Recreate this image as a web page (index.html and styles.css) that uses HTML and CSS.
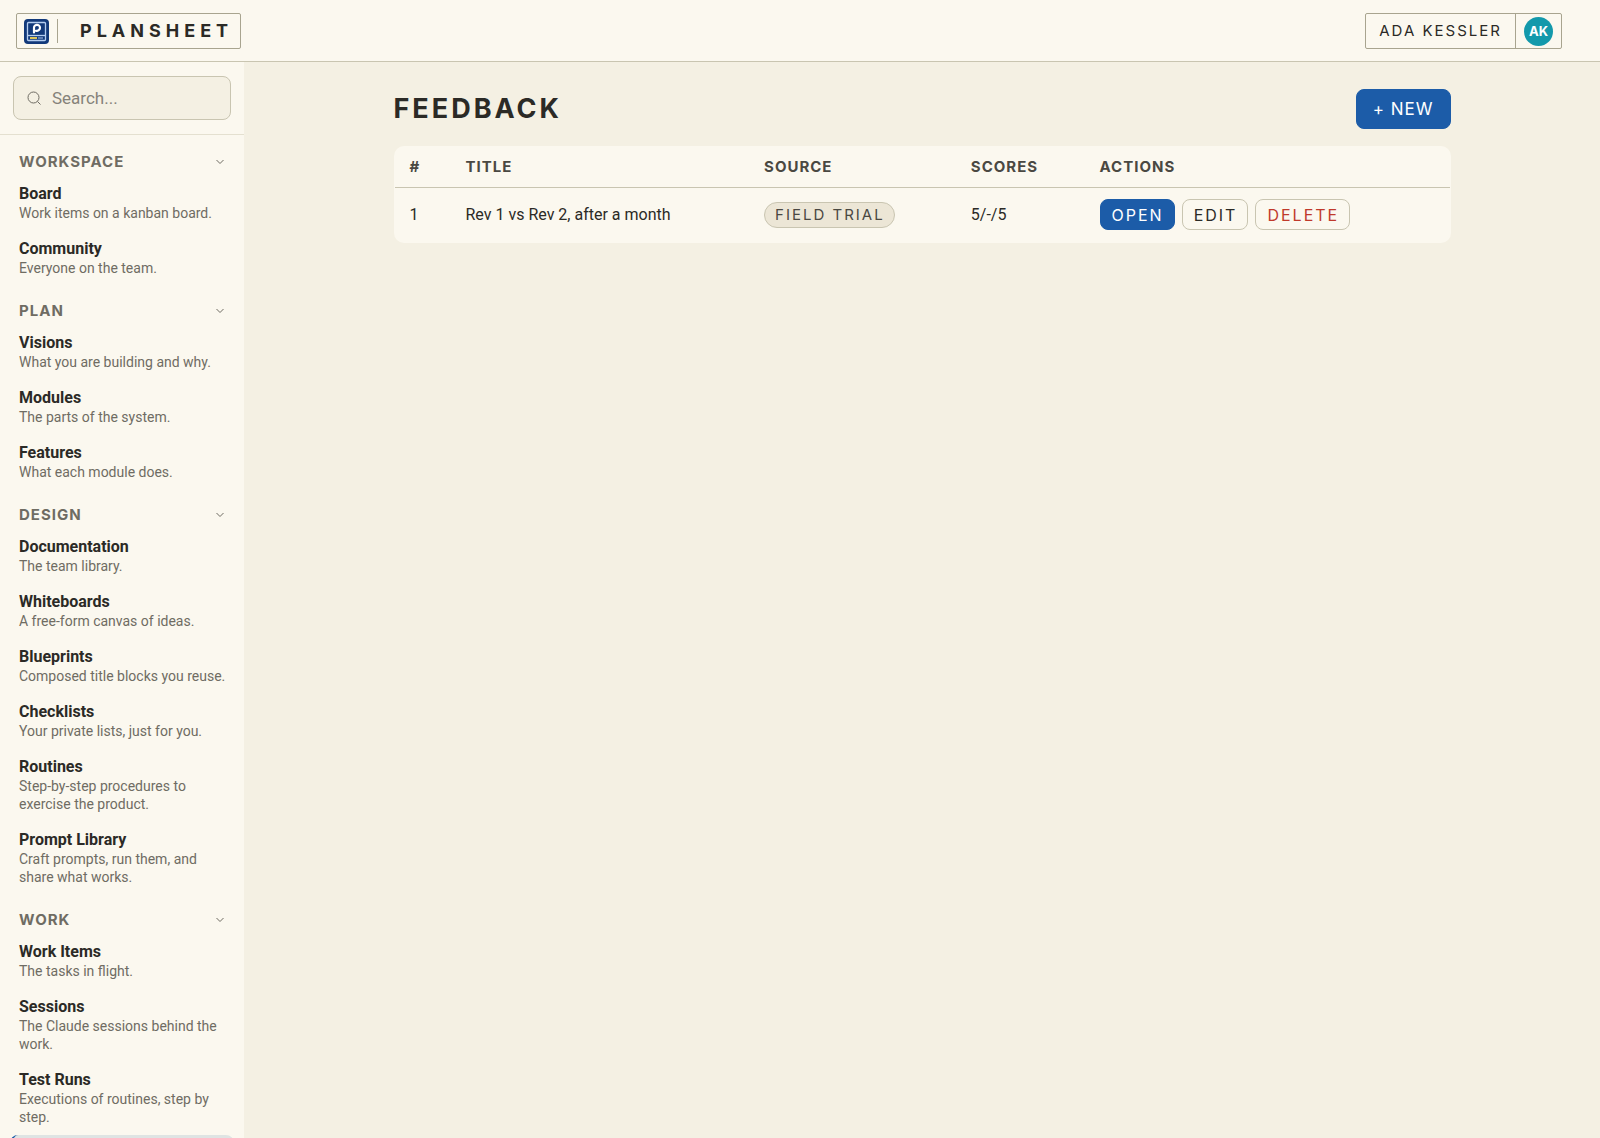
FILE: index.html
```html
<!DOCTYPE html>
<html lang="en">
<head>
<meta charset="utf-8">
<meta name="viewport" content="width=device-width, initial-scale=1">
<title>Feedback · Plansheet</title>
<link rel="stylesheet" href="styles.css">
</head>
<body>
<header class="topbar">
  <a class="brand" href="#">
    <svg class="brand-mark" viewBox="0 0 25 25" aria-hidden="true">
      <rect width="25" height="25" rx="4" fill="#12397a"/>
      <rect x="3.500" y="3.500" width="18" height="18" rx="1" fill="none" stroke="#b4cdf0" stroke-width="1.300"/>
      <path d="M3.500 16.500h18" stroke="#b4cdf0" stroke-width="1.300"/>
      <path d="M10 13.500V9.200a3 3 0 1 1 3 2.600h-1" fill="none" stroke="#fff" stroke-width="2.200" stroke-linecap="round" stroke-linejoin="round"/>
      <rect x="6" y="18" width="7" height="2" fill="#dcc458"/>
      <rect x="14" y="18" width="5" height="2" fill="#5f7fb4"/>
    </svg>
    <span class="brand-name">PLANSHEET</span>
  </a>
  <button class="user" type="button">
    <span class="user-name">ADA KESSLER</span>
    <span class="user-cell"><span class="avatar">AK</span></span>
  </button>
</header>
<div class="shell">
  <aside class="sidebar">
    <form class="search" role="search">
      <label class="search-box">
        <svg class="search-icon" viewBox="0 0 16 16" aria-hidden="true"><circle cx="7.500" cy="7.500" r="5.500"/><path d="M11.500 11.500l3 3"/></svg>
        <input class="search-input" type="search" placeholder="Search..." aria-label="Search">
      </label>
    </form>
    <nav class="nav">
      <button class="group" type="button">WORKSPACE<svg class="chevron" viewBox="0 0 10 6" aria-hidden="true"><path d="M1.500 1l3.500 3.500 3.500-3.500"/></svg></button>
      <a class="item" href="#"><span class="item-title">Board</span><span class="item-note">Work items on a kanban board.</span></a>
      <a class="item" href="#"><span class="item-title">Community</span><span class="item-note">Everyone on the team.</span></a>
      <button class="group" type="button">PLAN<svg class="chevron" viewBox="0 0 10 6" aria-hidden="true"><path d="M1.500 1l3.500 3.500 3.500-3.500"/></svg></button>
      <a class="item" href="#"><span class="item-title">Visions</span><span class="item-note">What you are building and why.</span></a>
      <a class="item" href="#"><span class="item-title">Modules</span><span class="item-note">The parts of the system.</span></a>
      <a class="item" href="#"><span class="item-title">Features</span><span class="item-note">What each module does.</span></a>
      <button class="group" type="button">DESIGN<svg class="chevron" viewBox="0 0 10 6" aria-hidden="true"><path d="M1.500 1l3.500 3.500 3.500-3.500"/></svg></button>
      <a class="item" href="#"><span class="item-title">Documentation</span><span class="item-note">The team library.</span></a>
      <a class="item" href="#"><span class="item-title">Whiteboards</span><span class="item-note">A free-form canvas of ideas.</span></a>
      <a class="item" href="#"><span class="item-title">Blueprints</span><span class="item-note">Composed title blocks you reuse.</span></a>
      <a class="item" href="#"><span class="item-title">Checklists</span><span class="item-note">Your private lists, just for you.</span></a>
      <a class="item" href="#"><span class="item-title">Routines</span><span class="item-note">Step-by-step procedures to exercise the product.</span></a>
      <a class="item" href="#"><span class="item-title">Prompt Library</span><span class="item-note">Craft prompts, run them, and share what works.</span></a>
      <button class="group" type="button">WORK<svg class="chevron" viewBox="0 0 10 6" aria-hidden="true"><path d="M1.500 1l3.500 3.500 3.500-3.500"/></svg></button>
      <a class="item" href="#"><span class="item-title">Work Items</span><span class="item-note">The tasks in flight.</span></a>
      <a class="item" href="#"><span class="item-title">Sessions</span><span class="item-note">The Claude sessions behind the work.</span></a>
      <a class="item" href="#"><span class="item-title">Test Runs</span><span class="item-note">Executions of routines, step by step.</span></a>
      <a class="item item-active" href="#" aria-current="page" aria-label="Feedback"></a>
    </nav>
  </aside>
  <main class="main">
    <div class="content">
      <div class="page-head">
        <h1 class="page-title">FEEDBACK</h1>
        <button class="btn btn-primary btn-large" type="button">+ NEW</button>
      </div>
      <div class="card">
        <table class="table">
          <colgroup><col class="col-num"><col class="col-title"><col class="col-source"><col class="col-scores"><col></colgroup>
          <thead>
            <tr><th>#</th><th>TITLE</th><th>SOURCE</th><th>SCORES</th><th>ACTIONS</th></tr>
          </thead>
          <tbody>
            <tr>
              <td>1</td>
              <td>Rev 1 vs Rev 2, after a month</td>
              <td><span class="tag">FIELD TRIAL</span></td>
              <td>5/-/5</td>
              <td>
                <div class="actions">
                  <button class="btn btn-primary" type="button">OPEN</button>
                  <button class="btn" type="button">EDIT</button>
                  <button class="btn btn-danger" type="button">DELETE</button>
                </div>
              </td>
            </tr>
          </tbody>
        </table>
      </div>
    </div>
  </main>
</div>
</body>
</html>
```
FILE: styles.css
```css
:root {
  --paper: #fbf8ef;
  --ground: #f4f0e3;
  --ink: #2b2a26;
  --ink-mid: #4a4842;
  --ink-soft: #6f6c63;
  --line: #c9c5b1;
  --line-strong: #a8a48f;
  --blue: #1c5ca8;
  --body: Roboto, "Liberation Sans", sans-serif;
  --display: Inter, "Liberation Sans", sans-serif;
}

* { box-sizing: border-box; }

body {
  margin: 0;
  height: 100vh;
  display: flex;
  flex-direction: column;
  overflow: hidden;
  background: var(--ground);
  color: var(--ink);
  font: 16px/24px var(--body);
}

button { font: inherit; color: inherit; cursor: pointer; }
a { color: inherit; text-decoration: none; }

.topbar {
  flex: none;
  display: flex;
  justify-content: space-between;
  align-items: center;
  padding: 13px 38px 12px 16px;
  background: var(--paper);
  border-bottom: 1px solid var(--line);
}

.brand,
.user {
  display: flex;
  align-items: center;
  height: 36px;
  padding: 0;
  border: 1px solid var(--line-strong);
  border-radius: 2px;
  background: none;
  font-family: var(--display);
}

.brand { padding: 0 7px; }
.brand-mark { width: 25px; height: 25px; }

.brand-name {
  margin-left: 8px;
  padding-left: 22px;
  border-left: 1px solid var(--line-strong);
  font-size: 18px;
  font-weight: 700;
  letter-spacing: 5px;
}

.user-name {
  padding: 0 13px;
  font-size: 15px;
  letter-spacing: 2px;
}

.user-cell {
  display: flex;
  align-items: center;
  align-self: stretch;
  padding: 0 8px;
  border-left: 1px solid var(--line-strong);
}

.avatar {
  width: 29px;
  height: 29px;
  border-radius: 50%;
  background: #1399ab;
  color: #fff;
  font-size: 13px;
  font-weight: 700;
  line-height: 28px;
  text-align: center;
}

.shell {
  flex: 1;
  display: flex;
  min-height: 0;
}

.sidebar {
  flex: none;
  width: 244px;
  display: flex;
  flex-direction: column;
  overflow: hidden;
  background: var(--paper);
}

.search {
  flex: none;
  padding: 14px 13px;
  border-bottom: 1px solid #e4e0d0;
}

.search-box {
  display: flex;
  align-items: center;
  gap: 10px;
  height: 44px;
  padding: 0 12px;
  border: 1px solid var(--line);
  border-radius: 8px;
  background: var(--ground);
}

.search-icon {
  flex: none;
  width: 16px;
  height: 16px;
  fill: none;
  stroke: var(--ink-soft);
}

.search-input {
  flex: 1;
  min-width: 0;
  padding: 0;
  border: 0;
  outline: 0;
  background: none;
  color: var(--ink);
  font: 17px/24px var(--body);
}

.search-input::placeholder { color: #85827a; }

.nav {
  display: flex;
  flex-direction: column;
  gap: 1px;
  min-height: 0;
  padding: 2px 10px 0;
  overflow: hidden;
}

.group {
  flex: none;
  display: flex;
  justify-content: space-between;
  align-items: center;
  height: 27px;
  margin-top: 11px;
  padding: 0 9px;
  border: 0;
  background: none;
  color: var(--ink-soft);
  font: 700 15px/20px var(--display);
  letter-spacing: 1px;
}

.chevron {
  width: 10px;
  height: 6px;
  fill: none;
  stroke: var(--ink-soft);
}

.item {
  flex: none;
  display: flex;
  flex-direction: column;
  padding: 8px 6px 8px 9px;
  border-radius: 8px;
}

.item-active {
  min-height: 54px;
  border-left: 3px solid var(--blue);
  background: #dfe4e3;
}

.item-title {
  font-size: 16px;
  font-weight: 700;
  line-height: 20px;
}

.item-note {
  color: var(--ink-soft);
  font-size: 14px;
  line-height: 18px;
}

.main {
  flex: 1;
  min-width: 0;
  padding: 27px 32px;
}

.content {
  max-width: 1057px;
  margin: 0 auto;
}

.page-head {
  display: flex;
  justify-content: space-between;
  align-items: center;
  margin-bottom: 17px;
}

.page-title {
  margin: 0;
  font: 700 27px/40px var(--display);
  letter-spacing: 3px;
}

.btn {
  height: 31px;
  padding: 0 10px 0 11px;
  border: 1px solid var(--line);
  border-radius: 8px;
  background: none;
  font: 16px/20px var(--display);
  letter-spacing: 2px;
}

.btn-primary {
  border-color: var(--blue);
  background: var(--blue);
  color: #fff;
}

.btn-danger { color: #c0392b; }

.btn-large {
  height: 40px;
  padding: 0 16px;
  font-size: 17px;
  letter-spacing: 1px;
}

.card {
  padding: 1px;
  border-radius: 10px;
  background: var(--paper);
}

.table {
  width: 100%;
  table-layout: fixed;
  border-collapse: collapse;
}

.col-num { width: 56px; }
.col-title { width: 28.3%; }
.col-source { width: 19.6%; }
.col-scores { width: 12.2%; }

.table th,
.table td {
  padding: 0 15px;
  text-align: left;
}

.table th {
  height: 40px;
  border-bottom: 1px solid var(--line);
  color: var(--ink-mid);
  font: 700 15px/20px var(--display);
  letter-spacing: 1px;
}

.table td { height: 55px; }

.tag {
  display: inline-block;
  padding: 0 9px 0 10px;
  border: 1px solid var(--line);
  border-radius: 13px;
  background: #ece6d6;
  color: var(--ink-mid);
  font: 15px/24px var(--display);
  letter-spacing: 2px;
}

.actions {
  display: flex;
  gap: 7px;
}
```
